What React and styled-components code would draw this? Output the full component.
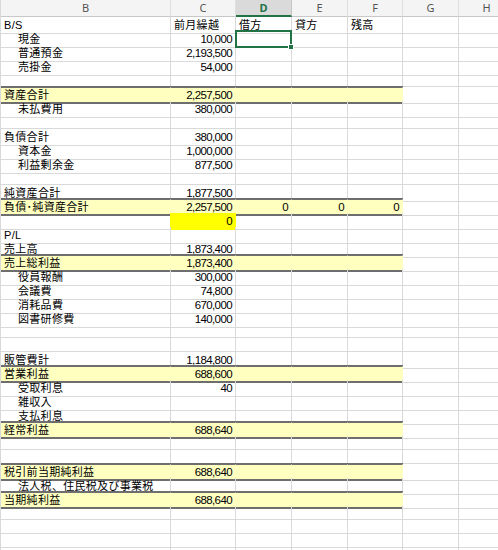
import React from 'react';
import styled, { createGlobalStyle, css } from 'styled-components';

const Global = createGlobalStyle`
  html, body { margin: 0; padding: 0; background: #fff; overflow: hidden; }
  body { font-family: "Liberation Sans", "Noto Sans CJK JP", sans-serif; }
`;

const COLS = '170px 65px 56px 56px 55px 56px 56px';
const GRID = '#d9d9d9';
const DARK = '#6e6e6e';
const YELLOW = '#ffffc0';
const HOT = '#ffff00';
const GREEN = '#217346';

const Sheet = styled.div`
  display: flex;
  flex-direction: column;
  width: max-content;
  border-left: 1px solid ${GRID};
`;

const HeaderRow = styled.div`
  display: grid;
  grid-template-columns: ${COLS};
  height: 17px;
`;

const HeaderCell = styled.div`
  box-sizing: border-box;
  height: 17px;
  background: ${(p) => (p.$active ? '#dadada' : '#f4f4f4')};
  border-right: 1px solid ${(p) => (p.$active ? '#c4c4c4' : '#dedede')};
  border-bottom: ${(p) => (p.$active ? `2px solid ${GREEN}` : '1px solid #c8c8c8')};
  color: ${(p) => (p.$active ? GREEN : '#555')};
  font-family: "Noto Sans", "Liberation Sans", sans-serif;
  font-weight: ${(p) => (p.$active ? 700 : 400)};
  font-size: 11px;
  line-height: 16px;
  text-align: center;
`;

const Row = styled.div`
  display: grid;
  grid-template-columns: ${COLS};
  height: ${(p) => p.$h}px;
`;

const Cell = styled.div`
  box-sizing: border-box;
  height: 100%;
  border-right: 1px solid ${GRID};
  border-bottom: 1px solid ${GRID};
  padding: 0 3px 0 ${(p) => (p.$indent ? 17 : 3)}px;
  color: #000;
  font-size: 11px;
  letter-spacing: 0.3px;
  line-height: 16px;
  white-space: nowrap;
  text-align: ${(p) => (p.$num ? 'right' : 'left')};
  ${(p) =>
    p.$num &&
    css`
      font-size: 11.5px;
      letter-spacing: -0.6px;
      padding-right: 3px;
    `}
  ${(p) =>
    p.$total &&
    css`
      background: ${YELLOW};
      border-right-color: ${YELLOW};
      border-top: 1px solid ${DARK};
      border-bottom: 2px solid ${DARK};
      box-shadow: 0 -1px 0 ${DARK};
      line-height: 14px;
    `}
  ${(p) =>
    p.$hot &&
    css`
      background: ${HOT};
      border-right-color: ${HOT};
      border-bottom-color: ${HOT};
      box-shadow: -1px 0 0 ${HOT};
    `}
  ${(p) =>
    p.$selected &&
    css`
      position: relative;
      z-index: 2;
      &::before {
        content: '';
        position: absolute;
        left: -1px;
        top: -1px;
        right: -1px;
        bottom: -1px;
        border: 2px solid ${GREEN};
      }
      &::after {
        content: '';
        position: absolute;
        right: -3px;
        bottom: -3px;
        width: 4px;
        height: 4px;
        background: ${GREEN};
        border: 1px solid #fff;
      }
    `}
`;

const rows = [
  { b: 'B/S', c: '前月繰越', d: '借方', e: '貸方', f: '残高', text: true },
  { b: '現金', ind: 1, c: '10,000', sel: true },
  { b: '普通預金', ind: 1, c: '2,193,500' },
  { b: '売掛金', ind: 1, c: '54,000' },
  {},
  { b: '資産合計', c: '2,257,500', total: true },
  { b: '未払費用', ind: 1, c: '380,000' },
  {},
  { b: '負債合計', c: '380,000' },
  { b: '資本金', ind: 1, c: '1,000,000' },
  { b: '利益剰余金', ind: 1, c: '877,500' },
  {},
  { b: '純資産合計', c: '1,877,500' },
  { b: '負債･純資産合計', c: '2,257,500', d: '0', e: '0', f: '0', total: true },
  { c: '0', hot: true },
  { b: 'P/L' },
  { b: '売上高', c: '1,873,400' },
  { b: '売上総利益', c: '1,873,400', total: true },
  { b: '役員報酬', ind: 1, c: '300,000' },
  { b: '会議費', ind: 1, c: '74,800' },
  { b: '消耗品費', ind: 1, c: '670,000' },
  { b: '図書研修費', ind: 1, c: '140,000' },
  { h: 13 },
  {},
  { b: '販管費計', c: '1,184,800' },
  { b: '営業利益', c: '688,600', total: true },
  { b: '受取利息', ind: 1, c: '40' },
  { b: '雑収入', ind: 1 },
  { b: '支払利息', ind: 1 },
  { b: '経常利益', c: '688,640', total: true },
  {},
  {},
  { b: '税引前当期純利益', c: '688,640', total: true },
  { b: '法人税、住民税及び事業税', ind: 1 },
  { b: '当期純利益', c: '688,640', total: true },
  {},
  {},
  {},
  {},
];

const headers = ['B', 'C', 'D', 'E', 'F', 'G', 'H'];

export default function App() {
  return (
    <>
      <Global />
      <Sheet>
        <HeaderRow>
          {headers.map((h) => (
            <HeaderCell key={h} $active={h === 'D'}>
              {h}
            </HeaderCell>
          ))}
        </HeaderRow>
        {rows.map((r, i) => {
          const numCols = !r.text;
          return (
            <Row key={i} $h={r.h || 14}>
              <Cell $indent={r.ind} $total={r.total}>{r.b}</Cell>
              <Cell $num={numCols} $total={r.total} $hot={r.hot}>{r.c}</Cell>
              <Cell $num={numCols} $total={r.total} $selected={r.sel}>{r.d}</Cell>
              <Cell $num={numCols} $total={r.total}>{r.e}</Cell>
              <Cell $num={numCols} $total={r.total}>{r.f}</Cell>
              <Cell />
              <Cell />
            </Row>
          );
        })}
      </Sheet>
    </>
  );
}
